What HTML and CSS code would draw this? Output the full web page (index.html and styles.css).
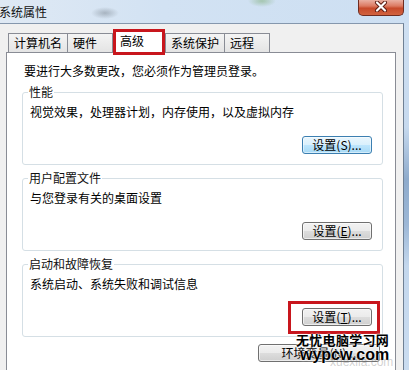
FILE: index.html
```html
<!DOCTYPE html>
<html lang="zh-CN">
<head>
<meta charset="utf-8">
<title>系统属性</title>
<link rel="stylesheet" href="styles.css">
</head>
<body>
<div class="win">
  <div class="titlebar">
    <span class="title">系统属性</span>
    <div class="close">
      <svg width="14" height="11" viewBox="0 0 14 11">
        <path d="M3 1.5 L11 9.5 M11 1.5 L3 9.5" stroke="#5a1a10" stroke-width="4" stroke-linecap="round"/>
        <path d="M3 1.5 L11 9.5 M11 1.5 L3 9.5" stroke="#ffffff" stroke-width="2.2" stroke-linecap="round"/>
      </svg>
    </div>
  </div>
  <div class="frame">
    <div class="dialog">
      <div class="tabs">
        <div class="tab">计算机名</div>
        <div class="tab">硬件</div>
        <div class="tab sel">高级</div>
        <div class="tab">系统保护</div>
        <div class="tab">远程</div>
      </div>
      <div class="panel">
        <p class="intro">要进行大多数更改，您必须作为管理员登录。</p>
        <fieldset class="group">
          <legend>性能</legend>
          <p class="desc">视觉效果，处理器计划，内存使用，以及虚拟内存</p>
          <div class="actions"><button class="btn default">设置(S)...</button></div>
        </fieldset>
        <fieldset class="group">
          <legend>用户配置文件</legend>
          <p class="desc">与您登录有关的桌面设置</p>
          <div class="actions"><button class="btn">设置(<u>E</u>)...</button></div>
        </fieldset>
        <fieldset class="group">
          <legend>启动和故障恢复</legend>
          <p class="desc">系统启动、系统失败和调试信息</p>
          <div class="actions"><span class="mark"><button class="btn">设置(<u>T</u>)...</button></span></div>
        </fieldset>
        <div class="bottom"><button class="btn wide">环境变量(N)...</button></div>
      </div>
    </div>
    <div class="edge"></div>
  </div>
  <div class="watermark">
    <div class="wm1">无忧电脑学习网</div>
    <div class="wm2">wypcw.com</div>
    <div class="wm3">xuexila.com</div>
  </div>
</div>
</body>
</html>
```
FILE: styles.css
```css
* { box-sizing: border-box; }
html, body { margin: 0; padding: 0; }
body {
  width: 409px;
  height: 370px;
  overflow: hidden;
  font-family: "Noto Sans CJK SC", "Noto Sans", sans-serif;
  font-size: 12px;
  color: #000;
}
.win {
  position: relative;
  width: 409px;
  height: 370px;
  display: flex;
  flex-direction: column;
  overflow: hidden;
  background: #c7daee;
}
.titlebar {
  height: 23px;
  flex: none;
  display: flex;
  justify-content: space-between;
  align-items: flex-start;
  background:
    radial-gradient(ellipse 14px 6px at 105px 13px, rgba(110,120,130,.45), rgba(110,120,130,0)),
    radial-gradient(ellipse 14px 6px at 262px 1px, rgba(120,170,110,.5), rgba(120,170,110,0)),
    linear-gradient(90deg, #dfe9f4 0%, #d2e2f3 40%, #cddff2 100%);
}
.title {
  margin-left: -1px;
  line-height: 24px;
  font-size: 12px;
  color: #111;
}
.close {
  width: 46px;
  height: 16px;
  margin-right: 5px;
  border: 1px solid #6f2c20;
  border-top: none;
  border-radius: 0 0 5px 5px;
  background: linear-gradient(#eab0a2 0%, #dc7a62 40%, #c74a2b 55%, #d1633f 100%);
  display: flex;
  justify-content: center;
  align-items: center;
  padding-bottom: 2px;
}
.frame {
  flex: 1;
  display: flex;
  min-height: 0;
}
.dialog {
  width: 404px;
  flex: none;
  background: #f0f0f0;
  border-top: 1px solid #8597ad;
  border-right: 1px solid #6f8094;
  padding-top: 6px;
  display: flex;
  flex-direction: column;
}
.edge {
  flex: 1;
  background: linear-gradient(#cfe0f2 0%, #c6d9ee 30%, #8eabcc 45%, #9cb7d6 58%, #c3d7ed 70%, #cadcf0 100%);
}
.tabs {
  display: flex;
  align-items: flex-end;
  margin-left: 8px;
  height: 22px;
  flex: none;
}
.tab {
  height: 19px;
  min-width: 46px;
  padding: 0 5px;
  border: 1px solid #898c95;
  border-bottom: none;
  margin-left: -1px;
  background: linear-gradient(#f4f4f4, #e4e4e4);
  line-height: 18px;
  color: #000;
  white-space: nowrap;
}
.tab:first-child { margin-left: 0; }
.tab.sel {
  position: relative;
  z-index: 2;
  height: 23px;
  width: 50px;
  margin-left: 1px;
  margin-right: 1px;
  margin-bottom: -1px;
  background: #fff;
  line-height: 20px;
}
.tab.sel::after {
  content: "";
  position: absolute;
  left: -2px;
  right: -2px;
  top: -2px;
  bottom: -2px;
  border: 3px solid #c8161d;
}
.tab.sel + .tab { margin-left: 0; }
.panel {
  flex: 1;
  margin-left: 6px;
  width: 390px;
  background: #fff;
  border: 1px solid #898c95;
  border-bottom: none;
  padding: 10px 12px 0 15px;
}
.intro {
  margin: 0 0 5px 2px;
  line-height: 16px;
}
.group {
  margin: 0 0 5px 0;
  min-width: 0;
  border: 1px solid #d5dfe5;
  border-radius: 3px;
  padding: 4px 10px 10px 5px;
}
.group legend {
  padding: 0 1px;
  line-height: 16px;
  color: #111;
}
.desc {
  margin: 0 0 0 2px;
  line-height: 16px;
}
.actions {
  display: flex;
  justify-content: flex-end;
  margin-top: 16px;
}
.btn {
  width: 70px;
  height: 18px;
  padding: 0;
  font-family: inherit;
  font-size: 12px;
  line-height: 16px;
  color: #000;
  border: 1px solid #707070;
  border-radius: 3px;
  background: linear-gradient(#f2f2f2 0%, #ebebeb 50%, #dddddd 50%, #cfcfcf 100%);
  box-shadow: inset 0 0 0 1px rgba(255,255,255,.6);
  white-space: nowrap;
}
.btn u { text-decoration: underline; }
.btn.default {
  border-color: #3c7fb1;
  background: linear-gradient(#eaf6fd 0%, #d9f0fc 50%, #bee6fd 50%, #a7d9f5 100%);
  box-shadow: inset 0 0 0 1px rgba(255,255,255,.5);
}
.mark {
  position: relative;
  display: block;
}
.mark::after {
  content: "";
  position: absolute;
  left: -14px;
  right: -8px;
  top: -7px;
  bottom: -8px;
  border: 3px solid #c8161d;
}
.bottom {
  display: flex;
  justify-content: flex-end;
  margin-top: 7px;
  padding-right: 3px;
}
.btn.wide { width: 122px; }
.watermark {
  position: absolute;
  left: 296px;
  top: 332px;
  width: 113px;
  height: 38px;
}
.wm1 {
  font-family: "Noto Sans CJK SC", sans-serif;
  font-weight: 700;
  font-size: 13px;
  line-height: 15px;
  letter-spacing: 0.3px;
  color: #000;
  text-shadow: 0 0 2px #fff, 0 0 2px #fff;
  white-space: nowrap;
}
.wm2 {
  font-family: "Liberation Sans", Arial, sans-serif;
  font-weight: 700;
  font-size: 16px;
  line-height: 16px;
  margin-left: 4px;
  color: #000;
  text-shadow: 0 0 2px #fff, 0 0 2px #fff;
  white-space: nowrap;
}
.wm3 {
  position: absolute;
  left: 34px;
  top: 23px;
  font-family: "Liberation Sans", Arial, sans-serif;
  font-size: 12px;
  color: rgba(120,120,120,.35);
  white-space: nowrap;
}
```
